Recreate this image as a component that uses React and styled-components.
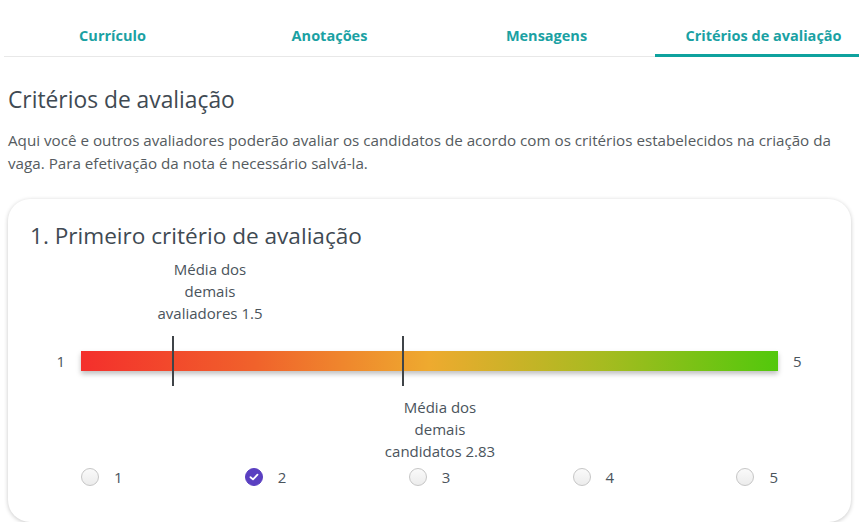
import React from "react";
import styled, { createGlobalStyle } from "styled-components";

const Global = createGlobalStyle`
  html, body { margin: 0; padding: 0; background: #fff; overflow: hidden; }
  body { font-family: "Open Sans", "Lato", sans-serif; color: #555; }
  * { box-sizing: border-box; }
`;

const Page = styled.div`
  width: 859px;
  overflow: hidden;
`;

const TabBar = styled.div`
  display: flex;
  width: 868px;
  margin-left: 4px;
  border-bottom: 1px solid #e8e8e8;
`;

const Tab = styled.div`
  flex: 0 0 217px;
  height: 57px;
  padding-top: 26px;
  text-align: center;
  font-size: 14.5px;
  line-height: 20px;
  font-weight: 700;
  color: #1aa1a3;
  border-bottom: 3px solid ${(p) => (p.$active ? "#0ea29e" : "transparent")};
  margin-bottom: -1px;
`;

const Content = styled.div`
  padding: 0 8px;
`;

const Heading = styled.h1`
  margin: 29px 0 0;
  font-size: 22.8px;
  line-height: 28px;
  font-weight: 400;
  color: #3f4a53;
`;

const Intro = styled.p`
  margin: 15px 0 0;
  font-size: 15.2px;
  line-height: 23px;
  color: #555b60;
`;

const Card = styled.section`
  margin-top: 24px;
  border-radius: 22px;
  box-shadow: 0 1px 4px rgba(0, 0, 0, 0.22);
  padding: 23px 22px 36px;
`;

const CardTitle = styled.h2`
  margin: 0;
  font-size: 22.6px;
  line-height: 28px;
  font-weight: 400;
  color: #3f4a53;
`;

const Chart = styled.div`
  margin-top: 8px;
  display: grid;
  grid-template-columns: 51px 1fr 51px;
  grid-template-rows: auto auto auto auto;
`;

const LabelRow = styled.div`
  grid-column: 2;
  position: relative;
  height: 66px;
  margin-top: ${(p) => p.$mt || 0}px;
`;

const MarkerLabel = styled.div`
  position: absolute;
  top: 0;
  width: 160px;
  margin-left: -43px;
  text-align: center;
  font-size: 15px;
  line-height: 22px;
  color: #4a545c;
`;

const EndLabel = styled.div`
  display: flex;
  align-items: center;
  justify-content: ${(p) => (p.$right ? "flex-start" : "flex-end")};
  padding: ${(p) => (p.$right ? "0 0 0 15px" : "0 16px 0 0")};
  font-size: 15px;
  color: #4a545c;
  margin-top: 12px;
  height: 50px;
`;

const TrackWrap = styled.div`
  position: relative;
  height: 50px;
  margin-top: 12px;
  display: flex;
  align-items: center;
`;

const Track = styled.div`
  width: 100%;
  height: 20px;
  background: linear-gradient(90deg, #f42f2c 0%, #f0622b 25%, #eeaa2f 50%, #a6bb20 75%, #52c80c 100%);
  box-shadow: 0 3px 5px rgba(0, 0, 0, 0.25);
`;

const Marker = styled.div`
  position: absolute;
  top: 0;
  width: 2px;
  height: 50px;
  margin-left: -1px;
  background: #3f4448;
`;

const RadioRow = styled.div`
  grid-column: 2;
  margin-top: 6px;
  display: flex;
  justify-content: space-between;
  align-items: center;
  height: 18px;
`;

const RadioItem = styled.label`
  display: flex;
  align-items: center;
  gap: 15px;
  font-size: 15px;
  color: #4a545c;
`;

const RadioCircle = styled.span`
  width: 18px;
  height: 18px;
  border-radius: 50%;
  display: flex;
  align-items: center;
  justify-content: center;
  background: ${(p) => (p.$checked ? "#5a3fc1" : "linear-gradient(180deg, #fafafa, #ececec)")};
  border: 1px solid ${(p) => (p.$checked ? "#5a3fc1" : "#c6c6c6")};
`;

const criteria = {
  title: "1. Primeiro critério de avaliação",
  above: { pct: 13.2, lines: ["Média dos", "demais", "avaliadores 1.5"] },
  below: { pct: 46.2, lines: ["Média dos", "demais", "candidatos 2.83"] },
  selected: 2,
};

export default function App() {
  const tabs = ["Currículo", "Anotações", "Mensagens", "Critérios de avaliação"];
  return (
    <Page>
      <Global />
      <TabBar>
        {tabs.map((t, i) => (
          <Tab key={t} $active={i === 3}>{t}</Tab>
        ))}
      </TabBar>
      <Content>
        <Heading>Critérios de avaliação</Heading>
        <Intro>
          Aqui você e outros avaliadores poderão avaliar os candidatos de acordo com os critérios estabelecidos na criação da vaga. Para efetivação da nota é necessário salvá-la.
        </Intro>
        <Card>
          <CardTitle>{criteria.title}</CardTitle>
          <Chart>
            <LabelRow>
              <MarkerLabel style={{ left: `${criteria.above.pct}%` }}>
                {criteria.above.lines.map((l) => (
                  <div key={l}>{l}</div>
                ))}
              </MarkerLabel>
            </LabelRow>
            <EndLabel style={{ gridColumn: 1, gridRow: 2 }}>1</EndLabel>
            <TrackWrap style={{ gridColumn: 2, gridRow: 2 }}>
              <Track />
              <Marker style={{ left: `${criteria.above.pct}%` }} />
              <Marker style={{ left: `${criteria.below.pct}%` }} />
            </TrackWrap>
            <EndLabel $right style={{ gridColumn: 3, gridRow: 2 }}>5</EndLabel>
            <LabelRow $mt={10} style={{ gridRow: 3 }}>
              <MarkerLabel style={{ left: `${criteria.below.pct}%` }}>
                {criteria.below.lines.map((l) => (
                  <div key={l}>{l}</div>
                ))}
              </MarkerLabel>
            </LabelRow>
            <RadioRow style={{ gridRow: 4 }}>
              {[1, 2, 3, 4, 5].map((n) => (
                <RadioItem key={n}>
                  <RadioCircle $checked={n === criteria.selected}>
                    {n === criteria.selected && (
                      <svg width="10" height="8" viewBox="0 0 10 8">
                        <path d="M1.5 4.2 L4 6.4 L8.5 1.6" fill="none" stroke="#fff" strokeWidth="1.8" strokeLinecap="round" strokeLinejoin="round" />
                      </svg>
                    )}
                  </RadioCircle>
                  {n}
                </RadioItem>
              ))}
            </RadioRow>
          </Chart>
        </Card>
      </Content>
    </Page>
  );
}
